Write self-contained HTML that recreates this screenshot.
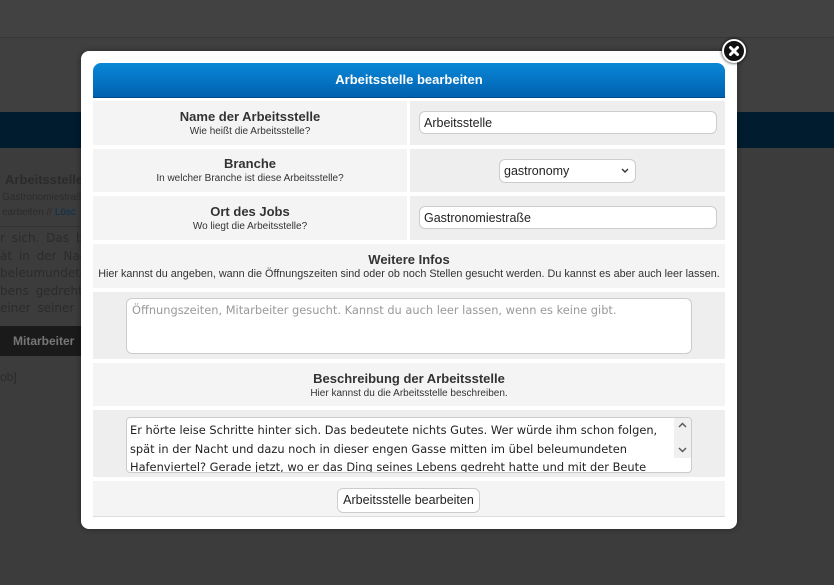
<!DOCTYPE html>
<html><head><meta charset="utf-8"><style>
*{box-sizing:border-box;margin:0;padding:0}
body{width:834px;height:585px;overflow:hidden;background:#3c3c3c;font-family:"Liberation Sans",sans-serif;position:relative}
.abs{position:absolute}
.t{font-size:12px;color:#2b2b2b;white-space:nowrap}
.cell{position:absolute;text-align:center;color:#333;white-space:nowrap}
.cell b{font-size:13px;display:block}
.cell s{text-decoration:none;font-size:10px;display:block;margin-top:2px}
.inp{position:absolute;background:#fff;border:1px solid #ccc;border-radius:6px;font-size:12.5px;color:#222;padding:4px 4px;white-space:nowrap}
.ta{font-family:"DejaVu Sans",sans-serif;font-size:11.4px;white-space:normal}
</style></head><body>
<div class="abs" style="left:0;top:0;width:834px;height:37px;background:#424242"></div>
<div class="abs" style="left:0;top:37px;width:834px;height:1px;background:#373737"></div>
<div class="abs" style="left:0;top:38px;width:834px;height:74px;background:#404040"></div>
<div class="abs" style="left:0;top:112px;width:834px;height:36px;background:#011b2f"></div>
<div class="abs t" style="left:5px;top:172px;font-weight:bold;font-size:13px">Arbeitsstelle</div>
<div class="abs t" style="left:2px;top:192px;font-size:10px">Gastronomiestraße</div>
<div class="abs t" style="left:2px;top:207px;font-size:10px">earbeiten // <span style="color:#0a3050">Lösc</span></div>
<div class="abs" style="left:0;top:226px;width:90px;height:1px;background:#333"></div>
<div class="abs t" style="left:0;top:230px;line-height:17.5px;font-family:'DejaVu Sans',sans-serif;font-size:12px;word-spacing:3px">r sich. Das be<br>ät in der Nac<br>beleumundeter<br>bens gedreht<br>einer seiner</div>
<div class="abs" style="left:0;top:326px;width:90px;height:30px;background:#1a1a1a"></div>
<div class="abs t" style="left:13px;top:334px;color:#777;font-weight:bold">Mitarbeiter</div>
<div class="abs t" style="left:0;top:370px">ob]</div>

<div class="abs" style="left:81px;top:51px;width:656px;height:478px;background:#fff;border-radius:8px;box-shadow:0 0 6px rgba(0,0,0,.4)"></div>
<div class="abs" style="left:93px;top:63px;width:632px;height:35px;background:linear-gradient(#0a87d8,#0062b0);border-radius:8px 8px 0 0;border-bottom:1px solid #004a85;color:#fff;font-weight:bold;font-size:13px;text-align:center;line-height:34px">Arbeitsstelle bearbeiten</div>

<div class="cell" style="left:93px;top:101px;width:314px;height:44px;background:#f4f4f4;padding-top:8px"><b>Name der Arbeitsstelle</b><s>Wie heißt die Arbeitsstelle?</s></div>
<div class="abs" style="left:410px;top:101px;width:315px;height:44px;background:#eee"></div>
<div class="inp" style="left:419px;top:111px;width:298px;height:23px">Arbeitsstelle</div>

<div class="cell" style="left:93px;top:149px;width:314px;height:43px;background:#f4f4f4;padding-top:7px"><b>Branche</b><s>In welcher Branche ist diese Arbeitsstelle?</s></div>
<div class="abs" style="left:410px;top:149px;width:315px;height:43px;background:#eee"></div>
<div class="inp" style="left:499px;top:159px;width:137px;height:24px">gastronomy<svg style="position:absolute;right:6px;top:8px" width="8" height="6"><path d="M1 1L4 4L7 1" stroke="#333" stroke-width="1.4" fill="none"/></svg></div>

<div class="cell" style="left:93px;top:196px;width:314px;height:44px;background:#f4f4f4;padding-top:8px"><b>Ort des Jobs</b><s>Wo liegt die Arbeitsstelle?</s></div>
<div class="abs" style="left:410px;top:196px;width:315px;height:44px;background:#eee"></div>
<div class="inp" style="left:419px;top:206px;width:298px;height:23px">Gastronomiestraße</div>

<div class="cell" style="left:93px;top:244px;width:632px;height:44px;background:#f4f4f4;padding-top:8px"><b>Weitere Infos</b><s style="font-size:10.8px;margin-top:1px">Hier kannst du angeben, wann die Öffnungszeiten sind oder ob noch Stellen gesucht werden. Du kannst es aber auch leer lassen.</s></div>
<div class="abs" style="left:93px;top:292px;width:632px;height:67px;background:#eee"></div>
<div class="inp ta" style="left:126px;top:298px;width:566px;height:56px;color:#999;padding:4px 5px">Öffnungszeiten, Mitarbeiter gesucht. Kannst du auch leer lassen, wenn es keine gibt.</div>

<div class="cell" style="left:93px;top:363px;width:632px;height:43px;background:#f4f4f4;padding-top:8px"><b>Beschreibung der Arbeitsstelle</b><s>Hier kannst du die Arbeitsstelle beschreiben.</s></div>
<div class="abs" style="left:93px;top:410px;width:632px;height:67px;background:#eee"></div>
<div class="inp ta" style="left:126px;top:417px;width:566px;height:56px;overflow:hidden;line-height:18.5px;padding:3px 20px 0 3px;border-radius:4px">Er hörte leise Schritte hinter sich. Das bedeutete nichts Gutes. Wer würde ihm schon folgen, spät in der Nacht und dazu noch in dieser engen Gasse mitten im übel beleumundeten Hafenviertel? Gerade jetzt, wo er das Ding seines Lebens gedreht hatte und mit der Beute<span style="position:absolute;right:0;top:0;width:17px;height:40px;background:#f0f0f0"><svg style="position:absolute;left:4px;top:4px" width="9" height="32"><path d="M1 5L4.5 1.5L8 5M1 26L4.5 29.5L8 26" stroke="#555" stroke-width="1.4" fill="none"/></svg></span></div>

<div class="abs" style="left:93px;top:481px;width:632px;height:36px;background:#f4f4f4;border-bottom:1px solid #ddd"></div>
<div class="inp" style="left:337px;top:488px;width:143px;height:25px;text-align:center;padding:4px 0 0">Arbeitsstelle bearbeiten</div>

<div class="abs" style="left:722px;top:39px;width:24px;height:24px;border-radius:50%;background:#111;border:2px solid #fff;box-shadow:0 0 3px #000"><svg width="20" height="20" style="position:absolute;left:0;top:0"><path d="M6.5 6.5L13.5 13.5M13.5 6.5L6.5 13.5" stroke="#fff" stroke-width="3" stroke-linecap="round"/></svg></div>
</body></html>
